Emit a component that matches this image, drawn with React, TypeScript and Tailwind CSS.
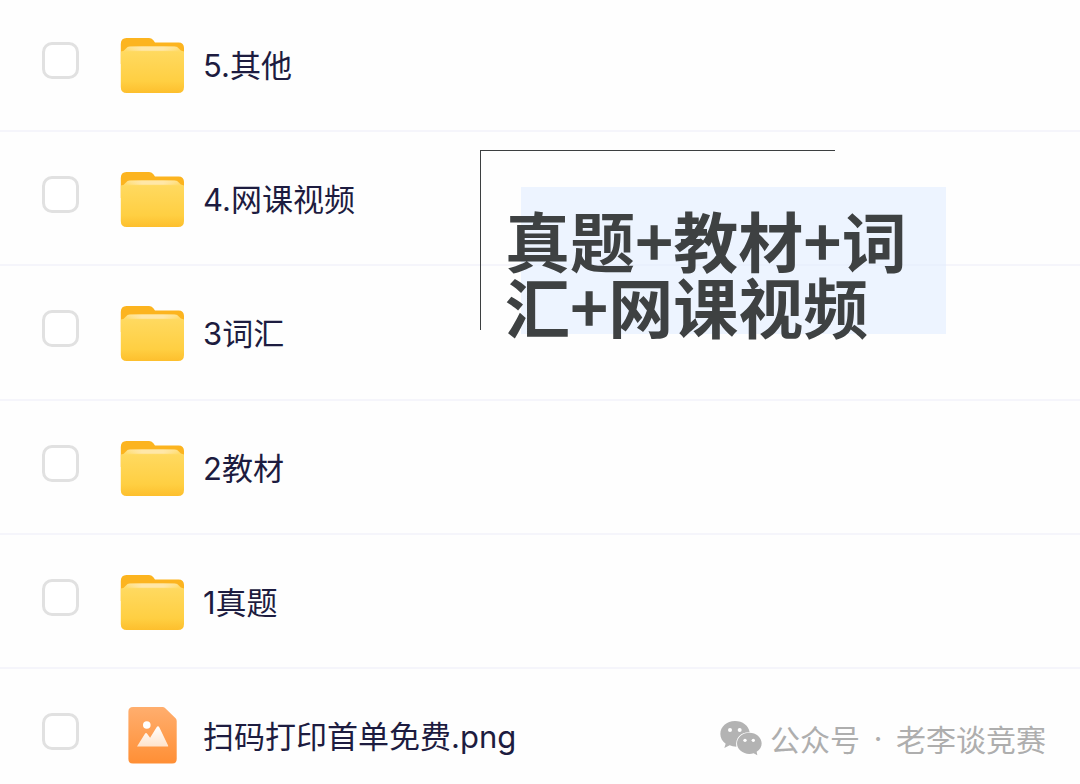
type FileKind = "folder" | "image";

interface FileEntry {
  id: string;
  name: string;
  kind: FileKind;
}

const files: FileEntry[] = [
  { id: "other", name: "5.其他", kind: "folder" },
  { id: "videos", name: "4.网课视频", kind: "folder" },
  { id: "words", name: "3词汇", kind: "folder" },
  { id: "books", name: "2教材", kind: "folder" },
  { id: "papers", name: "1真题", kind: "folder" },
  { id: "print", name: "扫码打印首单免费.png", kind: "image" },
];

function FolderIcon() {
  return (
    <svg viewBox="0 0 64 56" className="h-14 w-16 shrink-0" aria-hidden="true">
      <defs>
        <linearGradient id="folder-front" x1="0" y1="0" x2="0" y2="1">
          <stop offset="0" stopColor="#ffe28a" />
          <stop offset="0.12" stopColor="#ffd95f" />
          <stop offset="0.75" stopColor="#ffcf42" />
          <stop offset="1" stopColor="#fdbf2d" />
        </linearGradient>
        <linearGradient id="folder-shine" x1="0" y1="0" x2="1" y2="0">
          <stop offset="0" stopColor="#ffe9b0" stopOpacity="0" />
          <stop offset="0.3" stopColor="#ffe7a8" />
          <stop offset="0.7" stopColor="#ffe7a8" />
          <stop offset="1" stopColor="#ffe9b0" stopOpacity="0" />
        </linearGradient>
      </defs>
      <path
        d="M0.8 6Q0.8 0 6.5 0H29Q31.5 0 33.2 2.1L35 4.4H58.5Q64 4.4 64 10V26H0.8Z"
        fill="#fcb41f"
      />
      <path
        d="M0.8 13.5Q4.5 13 6 10.5Q7.2 8.6 10 8.6H54.5Q57.5 8.6 58.8 10.6Q60.2 13 64 13.5V49Q64 55 58 55H6.8Q0.8 55 0.8 49Z"
        fill="url(#folder-front)"
      />
      <rect x="6" y="8.4" width="53" height="4.4" rx="2.2" fill="url(#folder-shine)" />
    </svg>
  );
}

function ImageIcon() {
  return (
    <svg viewBox="0 0 64 58" className="-mt-0.5 h-[58px] w-16 shrink-0" aria-hidden="true">
      <defs>
        <linearGradient id="image-sheet" x1="0" y1="0" x2="0" y2="1">
          <stop offset="0" stopColor="#ffae6e" />
          <stop offset="1" stopColor="#ff8f35" />
        </linearGradient>
        <linearGradient id="image-hill" x1="0" y1="0" x2="0" y2="1">
          <stop offset="0" stopColor="#ffffff" />
          <stop offset="1" stopColor="#ffe3cb" />
        </linearGradient>
      </defs>
      <path
        d="M13 0H42.5Q44.1 0 45.3 1.2L55.6 11.2Q56.7 12.3 56.7 14V52Q56.7 56.6 52.1 56.6H13Q8.4 56.6 8.4 52V4.6Q8.4 0 13 0Z"
        fill="url(#image-sheet)"
      />
      <circle cx="26.8" cy="18" r="3.8" fill="#fff" />
      <path
        d="M17 39.6L24.8 27Q26 25.2 27.3 27L30.1 30.8L36.6 20.2Q38.1 18.2 39.4 20.4L48.1 38.4Q48.6 39.6 47.4 39.6Z"
        fill="url(#image-hill)"
      />
    </svg>
  );
}

function WechatIcon() {
  return (
    <svg viewBox="56 67 126 104" className="h-9 w-[42px] shrink-0" aria-hidden="true">
      <path
        d="M101 68C76 68 57 85 57 107C57 119 63 129 73 136L69 149L85 141Q93 145 105 145C101 119 119 101 145 102C142 82 124 68 101 68Z"
        fill="#b3b3b3"
      />
      <path
        d="M144 103C124 103 107 117 107 135C107 153 124 167 144 167Q151 167 157 165L168 171L166 160C176 154 181 145 181 135C181 117 164 103 144 103Z"
        fill="#b3b3b3"
      />
      <circle cx="86" cy="95" r="6" fill="#fff" />
      <circle cx="115" cy="95" r="6" fill="#fff" />
      <circle cx="131" cy="126" r="5" fill="#fff" />
      <circle cx="156" cy="126" r="5" fill="#fff" />
    </svg>
  );
}

function FileRow({ file }: { file: FileEntry }) {
  return (
    <li className="flex items-start border-b-2 border-[#f5f5fb] pt-10 pb-9 pl-[42px] first:pt-[38px] last:border-b-0 last:pb-4 nth-3:pb-[37px]">
      <input
        id={file.id}
        type="checkbox"
        className="mt-1 size-[37px] shrink-0 appearance-none rounded-[10px] border-[3px] border-[#e1e1e1] bg-white checked:bg-[#fcb41f]"
      />
      <label
        htmlFor={file.id}
        className="ml-[41px] flex items-center gap-[19px] text-[31px] leading-[56px] text-[#1d1c40]"
      >
        {file.kind === "folder" ? <FolderIcon /> : <ImageIcon />}
        <span>{file.name}</span>
      </label>
    </li>
  );
}

export default function App() {
  return (
    <main className="relative min-h-screen overflow-hidden bg-[#fefefe] font-[Inter,'Noto_Sans_CJK_SC',sans-serif]">
      <ul>
        {files.map((file) => (
          <FileRow key={file.id} file={file} />
        ))}
      </ul>

      <div className="absolute top-[187px] left-[521px] h-[147px] w-[425px] bg-[#dfebff]/55" />
      <div className="absolute top-[150px] left-[480px] h-[180px] w-[355px] border-t border-l border-[#3c3f40]" />
      <h1 className="absolute top-[206px] left-[505px] w-[420px] font-['Noto_Sans_CJK_SC',sans-serif] text-[65px] leading-[66px] font-bold text-[#3e4142]">
        真题+教材+词
        <br />
        汇+网课视频
      </h1>

      <footer className="absolute right-[34px] bottom-[23px] flex items-center font-['Noto_Sans_CJK_SC',sans-serif] text-[30px] leading-[46px] text-[#aeaeae]">
        <WechatIcon />
        <span className="ml-2">公众号</span>
        <span className="w-9 text-center font-[Inter,sans-serif]">·</span>
        <span>老李谈竞赛</span>
      </footer>
    </main>
  );
}
